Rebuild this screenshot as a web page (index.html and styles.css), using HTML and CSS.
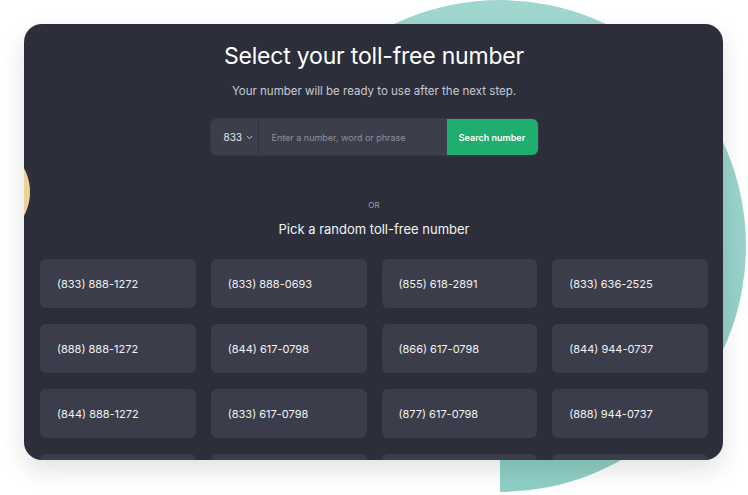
FILE: index.html
```html
<!DOCTYPE html>
<html lang="en">
<head>
    <meta charset="UTF-8">
    <meta name="viewport" content="width=device-width, initial-scale=1.0">
    <title>Select your toll-free number</title>
    <link rel="stylesheet" href="styles.css">
</head>
<body>
    <div class="stage">
        <!-- decorative blob behind the card -->
        <div class="blob"></div>

        <div class="card">
            <div class="dot"></div>

            <h1 class="title">Select your toll-free number</h1>
            <p class="subtitle">Your number will be ready to use after the next step.</p>

            <form class="search">
                <div class="prefix">833
                    <svg width="7" height="5" viewBox="0 0 7 5"><path d="M1 1.2 3.5 3.6 6 1.2" fill="none" stroke="#c9cad1" stroke-width="1"/></svg>
                </div>
                <input class="search-input" type="text" placeholder="Enter a number, word or phrase">
                <button class="search-btn" type="button">Search number</button>
            </form>

            <div class="or">OR</div>
            <h2 class="pick">Pick a random toll-free number</h2>

            <div class="numbers">
                <div class="num">(833) 888-1272</div>
                <div class="num">(833) 888-0693</div>
                <div class="num">(855) 618-2891</div>
                <div class="num">(833) 636-2525</div>
                <div class="num">(888) 888-1272</div>
                <div class="num">(844) 617-0798</div>
                <div class="num">(866) 617-0798</div>
                <div class="num">(844) 944-0737</div>
                <div class="num">(844) 888-1272</div>
                <div class="num">(833) 617-0798</div>
                <div class="num">(877) 617-0798</div>
                <div class="num">(888) 944-0737</div>
                <!-- next row peeks out under the card edge -->
                <div class="num"></div>
                <div class="num"></div>
                <div class="num"></div>
                <div class="num"></div>
            </div>
        </div>
    </div>
</body>
</html>
```

FILE: styles.css
```css
html, body{
    margin: 0;
    background: #fff;
}

.stage{
    position: relative;
    width: 748px;
    height: 495px;
    padding: 24px 0 0 24px;
    box-sizing: border-box;
    overflow: hidden;
    font-family: "Inter", "Noto Sans", sans-serif;
}

.blob{
    position: absolute;
    left: 254px;
    top: 0;
    width: 492px;
    height: 492px;
    border-radius: 50%;
    background: linear-gradient(180deg, #a0d6cf 0%, #8ecfc5 100%);
    clip-path: polygon(0 0, 100% 0, 100% 100%, 50% 100%, 50% 50%, 0 50%);
}

.card{
    position: relative;
    width: 699px;
    height: 436px;
    box-sizing: border-box;
    padding: 18px 15px 0 16px;
    background: #2c2f3b;
    border-radius: 18px;
    overflow: hidden;
    box-shadow: 0 10px 24px rgba(0, 0, 0, 0.12);
    text-align: center;
    color: #fff;
}

.dot{
    position: absolute;
    left: -94px;
    top: 118px;
    width: 100px;
    height: 100px;
    border-radius: 50%;
    background: #ecd39c;
}

.title{
    margin: 0;
    font-size: 23px;
    line-height: 28px;
    font-weight: 400;
    letter-spacing: -0.2px;
}

.subtitle{
    margin: 13px 0 0;
    font-size: 11.5px;
    line-height: 16px;
    color: #c9cad1;
}

.search{
    display: flex;
    width: 327px;
    height: 36px;
    margin: 20px auto 0;
    border-radius: 6px;
    overflow: hidden;
    background: #3c3f4b;
    box-shadow: 0 0 0 1px #353845;
}

.prefix{
    display: flex;
    align-items: center;
    gap: 4px;
    width: 48px;
    padding-left: 13px;
    box-sizing: border-box;
    border-right: 1px solid #2e313c;
    font-size: 10px;
    color: #e6e7ea;
}

.search-input{
    flex: 1;
    min-width: 0;
    border: 0;
    background: transparent;
    padding: 0 13px;
    font: inherit;
    font-size: 9px;
    color: #fff;
    outline: none;
}

.search-input::placeholder{
    color: #8e909b;
}

.search-btn{
    width: 91px;
    border: 0;
    background: #1fae70;
    color: #fff;
    font: inherit;
    font-size: 9px;
    font-weight: 600;
}

.or{
    margin-top: 45px;
    font-size: 8px;
    line-height: 10px;
    color: #9d9fa8;
}

.pick{
    margin: 10px 0 0;
    font-size: 13px;
    line-height: 18px;
    font-weight: 400;
    color: #f3f3f5;
}

.numbers{
    display: grid;
    grid-template-columns: repeat(4, 1fr);
    gap: 16px 15px;
    margin-top: 21px;
    text-align: left;
}

.num{
    height: 49px;
    padding-left: 17px;
    display: flex;
    align-items: center;
    border-radius: 6px;
    background: #3b3e4a;
    font-size: 11px;
    color: #f2f2f4;
}
```
